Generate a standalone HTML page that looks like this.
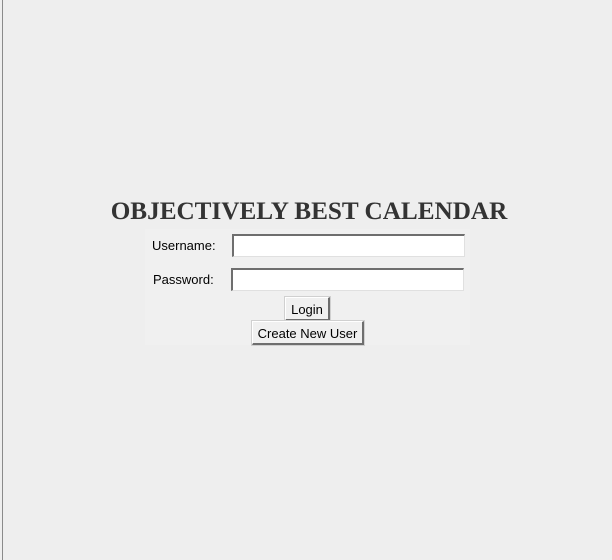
<!DOCTYPE html>
<html><head><style>
html,body{margin:0;padding:0;}
body{width:612px;height:560px;background:#eeeeee;position:relative;overflow:hidden;font-family:"Liberation Sans",Arial,sans-serif;}
.lb{position:absolute;left:2px;top:0;width:1px;height:560px;background:#8a8a8a;}
.panel{position:absolute;left:145px;top:229px;width:325px;height:116px;background:#f0f0f0;}
h1{position:absolute;left:3px;width:612px;top:198px;margin:0;text-align:center;font-family:"Liberation Serif",serif;font-weight:bold;font-size:25.2px;color:#333;line-height:28px;}
.lab{position:absolute;font-size:13px;color:#000;}
.in{position:absolute;background:#fff;box-sizing:border-box;border-top:2px solid #6e6e6e;border-left:2px solid #6e6e6e;border-right:1px solid #e0e0e0;border-bottom:1px solid #e0e0e0;height:23px;}
.btn{position:absolute;box-sizing:border-box;background:#f0f0f0;border-top:1px solid #fff;border-left:1px solid #fff;border-right:2px solid #6e6e6e;border-bottom:2px solid #6e6e6e;font-size:13px;text-align:center;line-height:23px;color:#000;outline:1px solid #d0d0d0;}
</style></head><body>
<div class="lb"></div>
<div class="panel"></div>
<h1>OBJECTIVELY BEST CALENDAR</h1>
<div class="lab" style="left:152px;top:238px">Username:</div>
<div class="in" style="left:232px;top:234px;width:233px"></div>
<div class="lab" style="left:153px;top:272px">Password:</div>
<div class="in" style="left:231px;top:268px;width:233px"></div>
<div class="btn" style="left:285px;top:297px;width:45px;height:24px">Login</div>
<div class="btn" style="left:252px;top:321px;width:112px;height:24px">Create New User</div>
</body></html>
